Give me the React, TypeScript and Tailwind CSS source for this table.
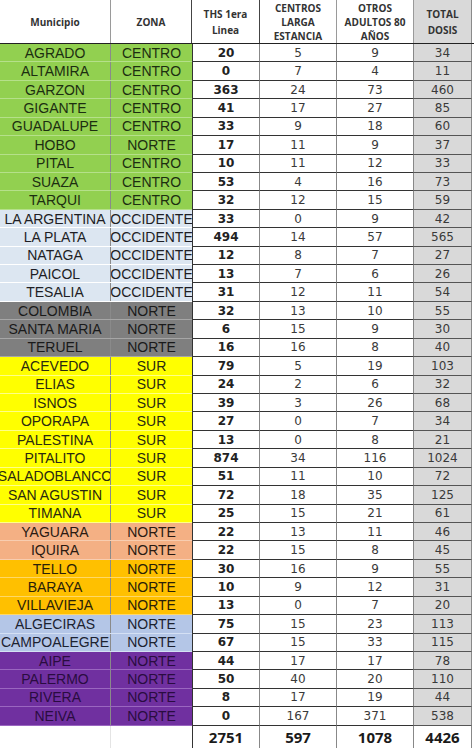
import React from "react";

type Row = [string, string, number, number, number, number];

const groups: { bg: string; text: string; line: string; rows: Row[] }[] = [
  {
    bg: "bg-[#92d050]",
    text: "text-[#1c2e10]",
    line: "border-[#b5e08a]",
    rows: [
      ["AGRADO", "CENTRO", 20, 5, 9, 34],
      ["ALTAMIRA", "CENTRO", 0, 7, 4, 11],
      ["GARZON", "CENTRO", 363, 24, 73, 460],
      ["GIGANTE", "CENTRO", 41, 17, 27, 85],
      ["GUADALUPE", "CENTRO", 33, 9, 18, 60],
      ["HOBO", "NORTE", 17, 11, 9, 37],
      ["PITAL", "CENTRO", 10, 11, 12, 33],
      ["SUAZA", "CENTRO", 53, 4, 16, 73],
      ["TARQUI", "CENTRO", 32, 12, 15, 59],
    ],
  },
  {
    bg: "bg-[#dce6f1]",
    text: "text-[#1e1e24]",
    line: "border-[#ffffff]",
    rows: [
      ["LA ARGENTINA", "OCCIDENTE", 33, 0, 9, 42],
      ["LA PLATA", "OCCIDENTE", 494, 14, 57, 565],
      ["NATAGA", "OCCIDENTE", 12, 8, 7, 27],
      ["PAICOL", "OCCIDENTE", 13, 7, 6, 26],
      ["TESALIA", "OCCIDENTE", 31, 12, 11, 54],
    ],
  },
  {
    bg: "bg-[#7f7f7f]",
    text: "text-[#1a1a1a]",
    line: "border-[#a6a6a6]",
    rows: [
      ["COLOMBIA", "NORTE", 32, 13, 10, 55],
      ["SANTA MARIA", "NORTE", 6, 15, 9, 30],
      ["TERUEL", "NORTE", 16, 16, 8, 40],
    ],
  },
  {
    bg: "bg-[#ffff00]",
    text: "text-[#2a2a10]",
    line: "border-[#ffff88]",
    rows: [
      ["ACEVEDO", "SUR", 79, 5, 19, 103],
      ["ELIAS", "SUR", 24, 2, 6, 32],
      ["ISNOS", "SUR", 39, 3, 26, 68],
      ["OPORAPA", "SUR", 27, 0, 7, 34],
      ["PALESTINA", "SUR", 13, 0, 8, 21],
      ["PITALITO", "SUR", 874, 34, 116, 1024],
      ["SALADOBLANCO", "SUR", 51, 11, 10, 72],
      ["SAN AGUSTIN", "SUR", 72, 18, 35, 125],
      ["TIMANA", "SUR", 25, 15, 21, 61],
    ],
  },
  {
    bg: "bg-[#f4b084]",
    text: "text-[#2a1a12]",
    line: "border-[#f8cdb0]",
    rows: [
      ["YAGUARA", "NORTE", 22, 13, 11, 46],
      ["IQUIRA", "NORTE", 22, 15, 8, 45],
    ],
  },
  {
    bg: "bg-[#ffc000]",
    text: "text-[#2a2008]",
    line: "border-[#ffd866]",
    rows: [
      ["TELLO", "NORTE", 30, 16, 9, 55],
      ["BARAYA", "NORTE", 10, 9, 12, 31],
      ["VILLAVIEJA", "NORTE", 13, 0, 7, 20],
    ],
  },
  {
    bg: "bg-[#b4c6e7]",
    text: "text-[#1c2230]",
    line: "border-[#d4e0f4]",
    rows: [
      ["ALGECIRAS", "NORTE", 75, 15, 23, 113],
      ["CAMPOALEGRE", "NORTE", 67, 15, 33, 115],
    ],
  },
  {
    bg: "bg-[#7030a0]",
    text: "text-[#2a0c40]",
    line: "border-[#9a66c0]",
    rows: [
      ["AIPE", "NORTE", 44, 17, 17, 78],
      ["PALERMO", "NORTE", 50, 40, 20, 110],
      ["RIVERA", "NORTE", 8, 17, 19, 44],
      ["NEIVA", "NORTE", 0, 167, 371, 538],
    ],
  },
];

const arial = "font-['Liberation_Sans',Arial,sans-serif]";
const calibri = "font-['Open_Sans',sans-serif]";
const numFont = "font-['DejaVu_Sans',sans-serif]";

function Header() {
  return (
    <div className={`flex h-[44px] border-b border-[#222] bg-white ${calibri} text-[10px] font-bold leading-[16px] text-[#333]`}>
      <div className="w-[111px] flex items-center justify-center border-r border-[#9a9a9a]">Municipio</div>
      <div className="w-[81px] flex items-center justify-center border-r border-[#444]">ZONA</div>
      <div className="w-[68px] flex items-center justify-center text-center border-r border-[#444]">
        THS 1era
        <br />
        Linea
      </div>
      <div className="w-[77px] flex items-center justify-center text-center border-r border-[#9a9a9a] leading-[14px]">
        CENTROS
        <br />
        LARGA
        <br />
        ESTANCIA
      </div>
      <div className="w-[77px] flex items-center justify-center text-center border-r border-[#9a9a9a] leading-[14px]">
        OTROS
        <br />
        ADULTOS 80
        <br />
        AÑOS
      </div>
      <div className="w-[58px] flex items-center justify-center text-center bg-[#d9d9d9] border-r border-[#8a8a8a]">
        TOTAL
        <br />
        DOSIS
      </div>
    </div>
  );
}

function DataRow({ row, bg, text, line }: { row: Row; bg: string; text: string; line: string }) {
  const [muni, zona, ths, centros, otros, total] = row;
  return (
    <div className="flex h-[18.43px]">
      <div className={`w-[111px] ${bg} ${text} ${line} border-b flex items-center justify-center overflow-hidden whitespace-nowrap ${arial} text-[14px] leading-none`}>
        <div className="flex justify-center w-full border-r border-[#8a8a8a] h-full items-center overflow-hidden">
          <span className="shrink-0">{muni}</span>
        </div>
      </div>
      <div className={`w-[81px] ${bg} ${text} ${line} border-b flex items-center justify-center overflow-hidden whitespace-nowrap ${arial} text-[14px] leading-none`}>
        <span className="shrink-0">{zona}</span>
      </div>
      <div className={`w-[68px] bg-white border-l border-[#333] border-b border-b-[#333] border-r border-r-[#888] flex items-center justify-center ${numFont} text-[12px] font-bold text-[#222]`}>
        {ths}
      </div>
      <div className={`w-[77px] bg-white border-b border-[#333] border-r border-r-[#888] flex items-center justify-center ${numFont} text-[12px] text-[#3a3a3a]`}>
        {centros}
      </div>
      <div className={`w-[77px] bg-white border-b border-[#333] border-r border-r-[#888] flex items-center justify-center ${numFont} text-[12px] text-[#3a3a3a]`}>
        {otros}
      </div>
      <div className={`w-[58px] bg-[#d9d9d9] border-b border-[#555] border-r border-r-[#888] flex items-center justify-center ${numFont} text-[12px] text-[#3a3a3a]`}>
        {total}
      </div>
    </div>
  );
}

export default function App() {
  return (
    <div className="w-[474px] h-[748px] overflow-hidden bg-white">
      <Header />
      {groups.map((g) =>
        g.rows.map((r) => <DataRow key={r[0]} row={r} bg={g.bg} text={g.text} line={g.line} />)
      )}
      <div className={`flex h-[24px] ${calibri} text-[15px] font-bold text-[#1a1a1a]`}>
        <div className="w-[111px] border-r border-[#e4e4e4]" />
        <div className="w-[81px]" />
        <div className="w-[68px] border-l border-[#333] border-r border-r-[#888] flex items-center justify-center">2751</div>
        <div className="w-[77px] border-r border-[#888] flex items-center justify-center">597</div>
        <div className="w-[77px] border-r border-[#888] flex items-center justify-center">1078</div>
        <div className="w-[58px] border-r border-[#888] flex items-center justify-center">4426</div>
      </div>
    </div>
  );
}
